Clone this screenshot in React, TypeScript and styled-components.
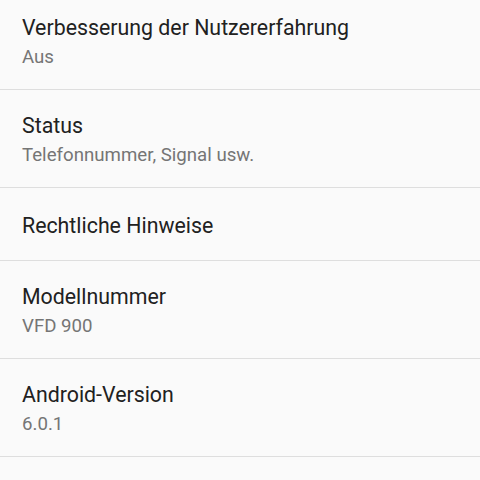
import React from "react";
import styled, { createGlobalStyle } from "styled-components";

type Item = {
  title: string;
  summary?: string;
};

const items: Item[] = [
  { title: "Verbesserung der Nutzererfahrung", summary: "Aus" },
  { title: "Status", summary: "Telefonnummer, Signal usw." },
  { title: "Rechtliche Hinweise" },
  { title: "Modellnummer", summary: "VFD 900" },
  { title: "Android-Version", summary: "6.0.1" },
];

const App = () => {
  return (
    <>
      <GlobalStyle />
      <Screen>
        <List>
          {items.map((item) => (
            <Row key={item.title} $twoLine={item.summary !== undefined}>
              <Title>{item.title}</Title>
              {item.summary && <Summary>{item.summary}</Summary>}
            </Row>
          ))}
        </List>
      </Screen>
    </>
  );
};

export default App;

const GlobalStyle = createGlobalStyle`
  html, body {
    margin: 0;
    padding: 0;
    background: #fafafa;
  }
  body {
    font-family: Roboto, "Noto Sans", sans-serif;
  }
`;

const Screen = styled.div`
  width: 480px;
  height: 480px;
  overflow: hidden;
  background: #fafafa;
`;

const List = styled.div`
  display: flex;
  flex-direction: column;
  margin-top: -8px;
`;

const Row = styled.div<{ $twoLine: boolean }>`
  height: ${({ $twoLine }) => ($twoLine ? "94px" : "69px")};
  padding: 3px 22px 0;
  display: flex;
  flex-direction: column;
  justify-content: center;
  border-bottom: 1px solid #dedede;
  box-sizing: content-box;
`;

const Title = styled.div`
  font-size: 21.33px;
  line-height: 28px;
  color: #212121;
`;

const Summary = styled.div`
  font-size: 18.67px;
  line-height: 27px;
  margin-top: 2px;
  color: #757575;
`;
